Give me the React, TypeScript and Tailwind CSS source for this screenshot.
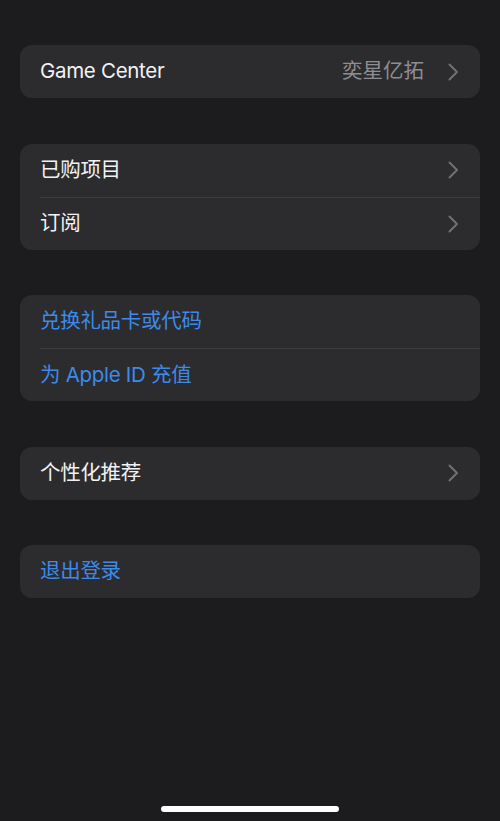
import React from "react";

interface Row {
  label: string;
  value?: string;
  blue?: boolean;
  chevron?: boolean;
}

const groups: Row[][] = [
  [{ label: "Game Center", value: "奕星亿拓", chevron: true }],
  [
    { label: "已购项目", chevron: true },
    { label: "订阅", chevron: true },
  ],
  [
    { label: "兑换礼品卡或代码", blue: true },
    { label: "为 Apple ID 充值", blue: true },
  ],
  [{ label: "个性化推荐", chevron: true }],
  [{ label: "退出登录", blue: true }],
];

const Chevron = () => (
  <svg width="11" height="18" viewBox="0 0 11 18" fill="none">
    <path
      d="M1.5 1.5L9 9L1.5 16.5"
      stroke="#707074"
      strokeWidth="2"
      strokeLinecap="round"
      strokeLinejoin="round"
    />
  </svg>
);

const App = () => {
  return (
    <div
      className="w-[500px] h-[821px] bg-[#1c1c1e] flex flex-col overflow-hidden"
      style={{ fontFamily: 'Inter, "Noto Sans CJK SC", sans-serif' }}
    >
      <div className="flex flex-col gap-[45.5px] px-5 pt-[45px]">
        {groups.map((group, gi) => (
          <div key={gi} className="bg-[#2c2c2e] rounded-xl overflow-hidden">
            {group.map((row, ri) => (
              <div key={ri} className="pl-5">
                <div
                  className={
                    "h-[53px] flex items-center pr-[21px] " +
                    (ri > 0 ? "border-t border-[#3d3d40]" : "")
                  }
                >
                  <span
                    className={
                      "text-[20.5px] tracking-[-0.3px] flex-1 " +
                      (row.blue ? "text-[#3d8aea]" : "text-[#f2f2f4]")
                    }
                  >
                    {row.label}
                  </span>
                  {row.value && (
                    <span className="text-[20.5px] text-[#8e8e92] mr-6">
                      {row.value}
                    </span>
                  )}
                  {row.chevron && <Chevron />}
                </div>
              </div>
            ))}
          </div>
        ))}
      </div>
      <div className="flex-1" />
      <div className="flex justify-center pb-[9px]">
        <div className="w-[178px] h-[6px] rounded-full bg-white" />
      </div>
    </div>
  );
};

export default App;
